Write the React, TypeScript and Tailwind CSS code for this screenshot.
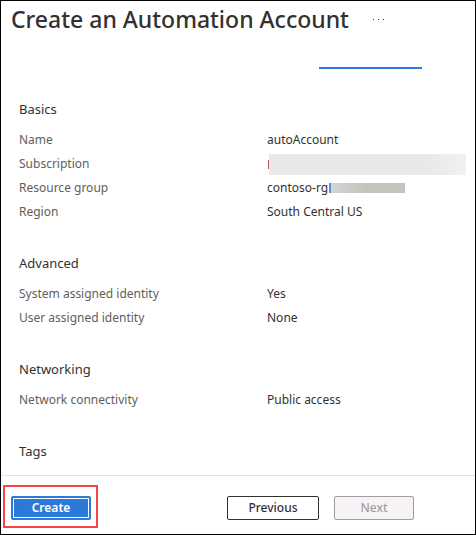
import React from "react";

type Item = { label: string; value: React.ReactNode };
type Section = { title: string; items: Item[] };

const sections: Section[] = [
  {
    title: "Basics",
    items: [
      { label: "Name", value: "autoAccount" },
      {
        label: "Subscription",
        value: (
          <>
            <span className="ml-px h-[9px] w-px shrink-0 bg-[#b45c60]" />
            <span className="h-[21px] w-[197px] bg-linear-to-r from-[#e9e9e9] from-80% to-[#f1f1f1]" />
          </>
        ),
      },
      {
        label: "Resource group",
        value: (
          <>
            contoso-rg
            <span className="ml-px h-[10px] w-[2px] bg-[#4f94dc]" />
            <span className="h-[10px] w-[74px] bg-linear-to-r from-[#d4d4d4] to-[#c4c4be] to-50%" />
          </>
        ),
      },
      { label: "Region", value: "South Central US" },
    ],
  },
  {
    title: "Advanced",
    items: [
      { label: "System assigned identity", value: "Yes" },
      { label: "User assigned identity", value: "None" },
    ],
  },
  {
    title: "Networking",
    items: [{ label: "Network connectivity", value: "Public access" }],
  },
  { title: "Tags", items: [] },
];

function SummarySection({ title, items }: Section) {
  return (
    <section>
      <h2 className="text-[13px] leading-6 text-[#323130]">{title}</h2>
      {items.length > 0 && (
        <dl className="mt-[7px]">
          {items.map((item) => (
            <div key={item.label} className="flex h-6 items-center">
              <dt className="w-[248px] shrink-0 text-[#605e5c]">{item.label}</dt>
              <dd className="flex min-w-0 flex-1 items-center text-[#323130]">{item.value}</dd>
            </div>
          ))}
        </dl>
      )}
    </section>
  );
}

export default function App() {
  return (
    <div className="flex min-h-screen flex-col border border-black bg-white font-['Noto_Sans','Open_Sans',sans-serif] text-xs">
      <header className="flex items-center gap-[22px] pt-[2px] pl-[10px]">
        <h1 className="text-[23px] leading-8 font-medium text-[#323130]">
          Create an Automation Account
        </h1>
        <button type="button" aria-label="More options" className="flex h-4 w-4 items-center justify-center gap-1">
          <span className="h-px w-px bg-[#323130]" />
          <span className="h-px w-px bg-[#323130]" />
          <span className="h-px w-px bg-[#323130]" />
        </button>
      </header>

      <div className="mt-8 ml-[318px] h-[2px] w-[103px] bg-[#2b7cd9]" />

      <main className="flex flex-1 flex-col gap-[27px] pt-7 pl-[18px]">
        {sections.map((section) => (
          <SummarySection key={section.title} {...section} />
        ))}
      </main>

      <footer className="flex border-t border-[#e6dfe2] pt-5 pb-[14px] pl-[10px] leading-5">
        <div className="relative mr-[136px]">
          <button
            type="button"
            className="block h-6 w-20 rounded-xs bg-[#2b7ad9] p-[2px] font-semibold text-white"
          >
            <span className="flex h-full items-center justify-center border border-white">Create</span>
          </button>
          <span className="pointer-events-none absolute -top-[11px] -right-[7px] -bottom-2 -left-2 border-2 border-[#fa4444]" />
        </div>
        <button
          type="button"
          className="mr-[15px] flex h-6 w-[92px] items-center justify-center rounded-xs border border-[#323130] bg-white font-medium text-[#323130]"
        >
          Previous
        </button>
        <button
          type="button"
          disabled
          className="flex h-6 w-20 items-center justify-center rounded-xs border border-[#a19f9d] bg-[#f7f2f6] font-medium text-[#a19f9d]"
        >
          Next
        </button>
      </footer>
    </div>
  );
}
